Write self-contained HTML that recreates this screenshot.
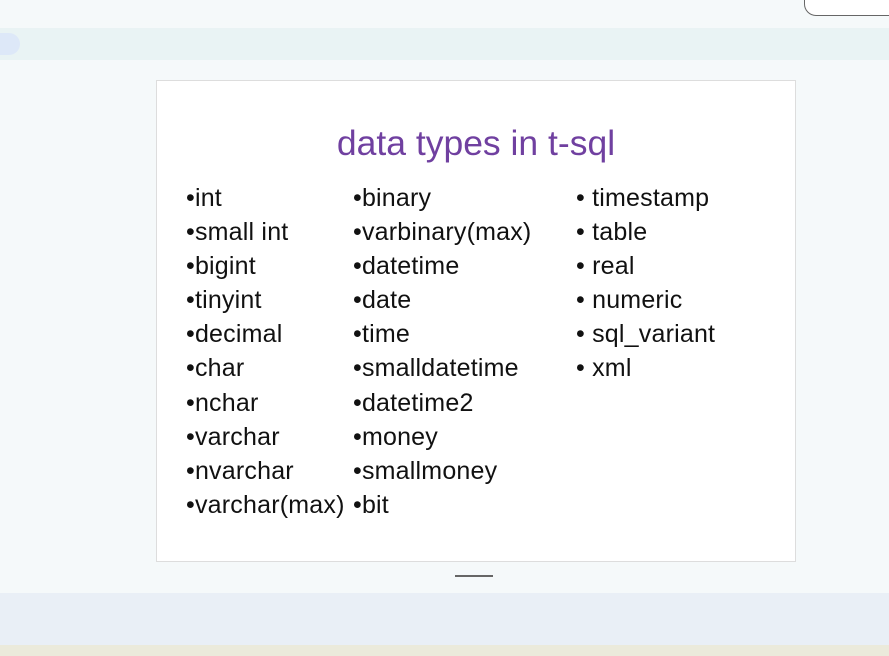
<!DOCTYPE html>
<html><head><meta charset="utf-8"><style>
body{margin:0;width:889px;height:656px;overflow:hidden;background:#f5f9fa;font-family:"Liberation Sans",sans-serif;position:relative}
.bar{position:absolute;left:0;top:28px;width:889px;height:32px;background:#e9f3f4}
.pill{position:absolute;left:-10px;top:33px;width:30px;height:22px;border-radius:11px;background:#dde8f8}
.btn{position:absolute;left:804px;top:-12px;width:100px;height:26px;border:1px solid #666;border-radius:12px;background:#fff}
.slide{position:absolute;left:156px;top:80px;width:638px;height:480px;background:#fff;border:1px solid #ddd}
.title{position:absolute;left:0;width:638px;top:42px;text-align:center;color:#7040a0;font-size:35.5px}
.col{position:absolute;top:100px;font-size:25px;line-height:34.1px;color:#111;white-space:nowrap;letter-spacing:0.2px}
.handle{position:absolute;left:455px;top:575px;width:38px;height:2px;background:#666}
.band{position:absolute;left:0;top:593px;width:889px;height:52px;background:#e9eff6}
.strip{position:absolute;left:0;top:645px;width:889px;height:11px;background:#ebeadb}
</style></head><body>
<div class="bar"></div><div class="pill"></div><div class="btn"></div>
<div class="slide">
<div class="title">data types in t-sql</div>
<div class="col" style="left:29px">•int<br>•small int<br>•bigint<br>•tinyint<br>•decimal<br>•char<br>•nchar<br>•varchar<br>•nvarchar<br>•varchar(max)</div>
<div class="col" style="left:196px">•binary<br>•varbinary(max)<br>•datetime<br>•date<br>•time<br>•smalldatetime<br>•datetime2<br>•money<br>•smallmoney<br>•bit</div>
<div class="col" style="left:419px">• timestamp<br>• table<br>• real<br>• numeric<br>• sql_variant<br>• xml</div>
</div>
<div class="handle"></div>
<div class="band"></div><div class="strip"></div>
</body></html>
